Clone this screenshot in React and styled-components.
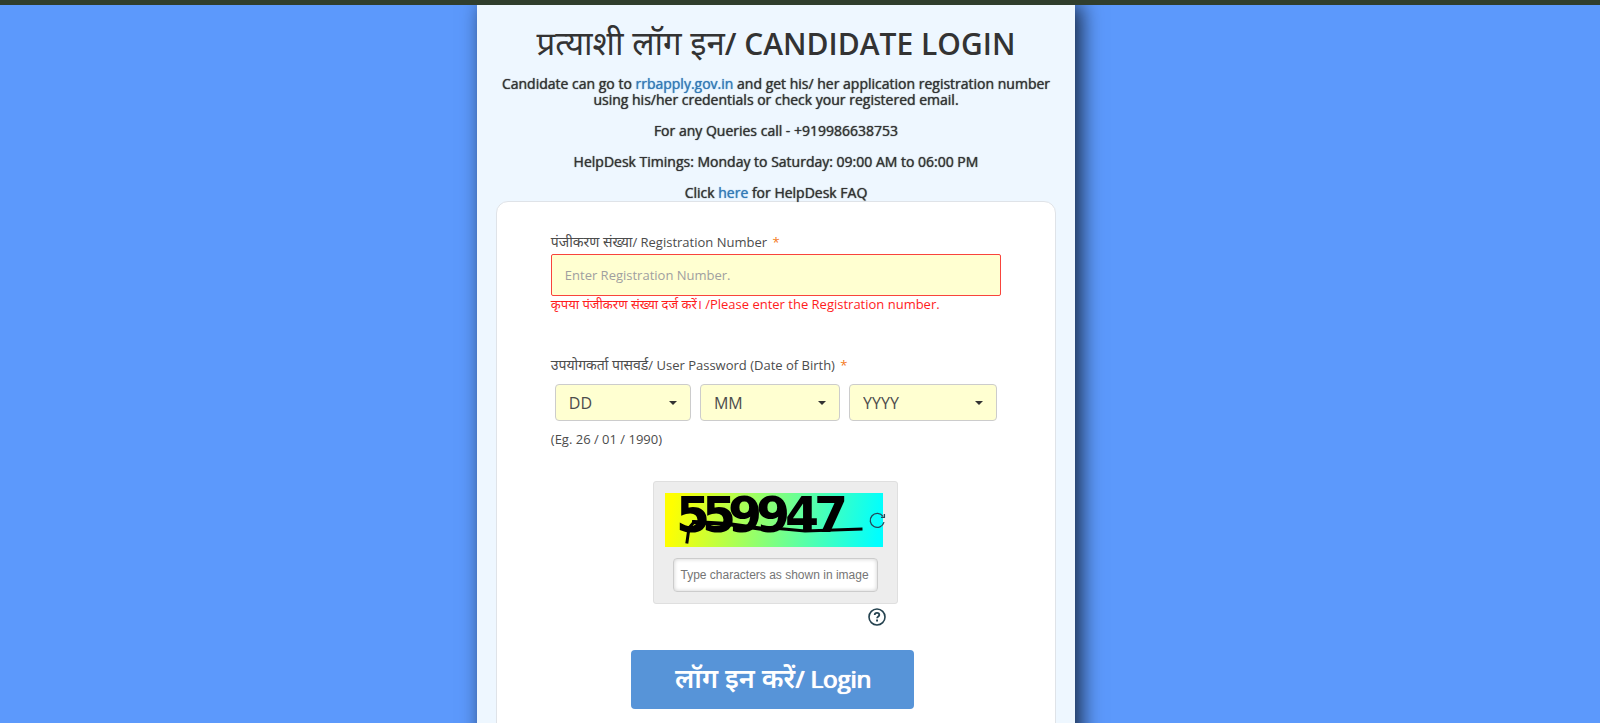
import { useState } from 'react';
import styled, { createGlobalStyle } from 'styled-components';

const COLORS = {
    page: '#5c99fc',
    topBar: '#303e2d',
    panel: '#eef7ff',
    field: '#ffffd1',
    text: '#333333',
    label: '#4c4c4c',
    link: '#337ab7',
    error: '#ff1c1c',
    button: '#5794d8',
}

const FONT = '"Open Sans", "Noto Sans", sans-serif';

const GlobalStyle = createGlobalStyle`
    * {
        box-sizing: border-box;
    }
    html {
        scrollbar-width: none;
    }
    body {
        margin: 0;
        background-color: ${COLORS.page};
        color: ${COLORS.text};
        font-family: ${FONT};
    }
`

const Page = styled.div`
    display: flex;
    flex-direction: column;
    min-height: 100vh;
    overflow-x: hidden;
`

const TopBar = styled.header`
    height: 5px;
    background-color: ${COLORS.topBar};
    z-index: 1;
`

const Panel = styled.main`
    flex: 1;
    width: 37.4%;
    margin-left: 29.8%;
    padding: 0 19px 20px;
    background-color: ${COLORS.panel};
    box-shadow: 6px 0 20px rgba(0, 0, 0, 0.75);
    @media(max-width: 1400px) {
        width: auto;
        max-width: 600px;
        margin: 0 auto;
    }
`

const Hindi = styled.span`
    font-size: ${props => props.size}px;
    font-weight: ${props => props.weight || 400};
    text-shadow: none;
`

const Heading = styled.h1`
    margin: 18px 0 12px;
    font-size: 30px;
    line-height: 40px;
    font-weight: 600;
    text-align: center;
`

const Notice = styled.p`
    margin: 0 0 15px;
    font-size: 14px;
    line-height: 16px;
    text-align: center;
    text-shadow: 0 0 1px currentColor;
    &:last-of-type {
        margin-bottom: 0;
    }
`

const TextLink = styled.a`
    color: ${COLORS.link};
    text-decoration: none;
    &:hover {
        text-decoration: underline;
    }
`

const Card = styled.form`
    display: flex;
    flex-direction: column;
    padding: 30px 54px 40px;
    border: 1px solid #dfe3e8;
    border-radius: 12px;
    background-color: #ffffff;
`

const Label = styled.label`
    display: block;
    font-size: 13px;
    line-height: 20px;
    color: ${COLORS.label};
`

const Legend = styled(Label).attrs({ as: 'legend' })`
    padding: 0;
    margin-bottom: 9px;
`

const Required = styled.span`
    margin-left: 2px;
    color: #f47a20;
`

const TextField = styled.input`
    width: 100%;
    height: 42px;
    margin-top: 2px;
    padding: 0 13px;
    border: 1px solid #f8443c;
    border-radius: 2px;
    background-color: ${COLORS.field};
    font-family: ${FONT};
    font-size: 13px;
    outline: none;
    &::placeholder {
        color: #a0a0a0;
        opacity: 1;
    }
`

const ErrorText = styled.div`
    font-size: 13px;
    line-height: 16px;
    color: ${COLORS.error};
`

const DateGroup = styled.fieldset`
    min-width: 0;
    margin: 43px 0 0;
    padding: 0;
    border: 0;
`

const DateRow = styled.div`
    display: grid;
    grid-template-columns: 136fr 140fr 148fr;
    gap: 9px;
    padding: 0 4px;
`

const SelectBox = styled.div`
    position: relative;
`

const Select = styled.select`
    appearance: none;
    display: block;
    width: 100%;
    height: 37px;
    padding: 0 13px;
    border: 1px solid #cccccc;
    border-radius: 4px;
    background-color: ${COLORS.field};
    color: ${COLORS.label};
    font-family: ${FONT};
    font-size: 16px;
`

const Caret = styled.span`
    position: absolute;
    top: 17px;
    right: 14px;
    border-top: 4px solid ${COLORS.text};
    border-left: 4px solid transparent;
    border-right: 4px solid transparent;
    pointer-events: none;
`

const Example = styled.div`
    margin-top: 8px;
    font-size: 13px;
    line-height: 20px;
    color: ${COLORS.label};
`

const CaptchaBlock = styled.div`
    display: flex;
    flex-direction: column;
    align-items: flex-end;
    align-self: center;
    margin-top: 32px;
`

const CaptchaBox = styled.div`
    display: flex;
    flex-direction: column;
    align-items: center;
    width: 245px;
    height: 123px;
    padding-top: 11px;
    border: 1px solid #dfdfdf;
    border-radius: 3px;
    background-color: #ededed;
`

const CaptchaPicture = styled.div`
    position: relative;
    width: 218px;
    height: 54px;
    margin: 0 3px 11px 0;
    background: linear-gradient(100deg, #ffff00 4%, #00ffff 97%);
`

const Digits = styled.svg`
    display: block;
    width: 100%;
    height: 100%;
    overflow: visible;
`

const IconButton = styled.button`
    display: flex;
    padding: 0;
    border: 0;
    background: none;
    cursor: pointer;
`

const RefreshButton = styled(IconButton)`
    position: absolute;
    top: 19px;
    right: -3px;
`

const HelpButton = styled(IconButton)`
    margin: 4px 12px 0 0;
`

const CaptchaInput = styled.input`
    width: 205px;
    height: 34px;
    padding: 0 6px;
    border: 1px solid #cccccc;
    border-radius: 4px;
    box-shadow: inset 0 0 4px rgba(0, 0, 0, 0.2);
    font-family: "Liberation Sans", Arial, sans-serif;
    font-size: 12px;
    &::placeholder {
        color: #757575;
        opacity: 1;
    }
`

const LoginButton = styled.button`
    align-self: center;
    width: 283px;
    height: 59px;
    margin: 24px 6px 0 0;
    padding: 0 0 2px;
    border: 0;
    border-radius: 4px;
    background-color: ${COLORS.button};
    color: #ffffff;
    font-family: ${FONT};
    font-size: 24px;
    line-height: 32px;
    text-shadow: 0 0 1px currentColor, 1px 0 0 currentColor;
    cursor: pointer;
`

const DATE_PARTS = [
    { name: 'day', label: 'DD', from: 1, to: 31 },
    { name: 'month', label: 'MM', from: 1, to: 12 },
    { name: 'year', label: 'YYYY', from: 1960, to: 2010 },
]

const DatePart = ({ part }) => {
    const values = [];
    for (let i = part.from; i <= part.to; i++) values.push(String(i).padStart(2, '0'));
    return (
        <SelectBox>
            <Select name={part.name} aria-label={part.name} defaultValue="">
                <option value="">{part.label}</option>
                {values.map(value => <option key={value} value={value}>{value}</option>)}
            </Select>
            <Caret />
        </SelectBox>
    )
}

const CaptchaDrawing = () => (
    <Digits viewBox="0 0 218 54" role="img" aria-label="captcha">
        <text x="11 37 63 91 120 149" y="39" fontFamily="DejaVu Sans" fontWeight="bold" fontSize="49">559947</text>
        <g fill="none" stroke="#000000" strokeLinecap="square">
            <path d="M22 49L24 35L29 29" strokeWidth="3" />
            <path d="M29 29L63 31L98 36" strokeWidth="4" />
            <path d="M98 34L140 38L196 36" strokeWidth="3" />
        </g>
    </Digits>
)

const RefreshIcon = () => (
    <svg width="17" height="17" viewBox="0 0 17 17" fill="none" stroke="#24485a" strokeWidth="1.3">
        <path d="M15 10.2A7 7 0 1 1 14 4.4" />
        <path d="M15.4 2V5.4H12" />
    </svg>
)

const HelpIcon = () => (
    <svg width="18" height="18" viewBox="0 0 18 18" fill="none" stroke="#24424f">
        <circle cx="9" cy="9" r="8" strokeWidth="1.6" />
        <path d="M6.7 7.1C6.7 5.7 7.7 4.9 9 4.9C10.4 4.9 11.3 5.7 11.3 6.9C11.3 8.4 9.1 8.5 9.1 10.3" strokeWidth="1.8" />
        <path d="M8.1 12.5H10" strokeWidth="1.9" />
    </svg>
)

const LoginForm = () => {
    const [registration, setRegistration] = useState('');
    return (
        <Card onSubmit={e => e.preventDefault()}>
            <Label htmlFor="registration">
                <Hindi size={14}>पंजीकरण संख्या</Hindi>/ Registration Number <Required>*</Required>
            </Label>
            <TextField
                id="registration"
                placeholder="Enter Registration Number."
                value={registration}
                onChange={e => setRegistration(e.target.value)}
            />
            <ErrorText>कृपया पंजीकरण संख्या दर्ज करें। /Please enter the Registration number.</ErrorText>
            <DateGroup>
                <Legend>
                    <Hindi size={14}>उपयोगकर्ता पासवर्ड</Hindi>/ User Password (Date of Birth) <Required>*</Required>
                </Legend>
                <DateRow>
                    {DATE_PARTS.map(part => <DatePart key={part.name} part={part} />)}
                </DateRow>
            </DateGroup>
            <Example>(Eg. 26 / 01 / 1990)</Example>
            <CaptchaBlock>
                <CaptchaBox>
                    <CaptchaPicture>
                        <CaptchaDrawing />
                        <RefreshButton type="button" aria-label="Refresh"><RefreshIcon /></RefreshButton>
                    </CaptchaPicture>
                    <CaptchaInput aria-label="Captcha" placeholder="Type characters as shown in image" />
                </CaptchaBox>
                <HelpButton type="button" aria-label="Help"><HelpIcon /></HelpButton>
            </CaptchaBlock>
            <LoginButton type="submit"><Hindi size={27} weight={600}>लॉग इन करें</Hindi>/ Login</LoginButton>
        </Card>
    )
}

const App = () => {
    return (
        <Page>
            <GlobalStyle />
            <TopBar />
            <Panel>
                <Heading><Hindi size={33}>प्रत्याशी लॉग इन</Hindi>/ CANDIDATE LOGIN</Heading>
                <Notice>
                    Candidate can go to <TextLink href="#apply">rrbapply.gov.in</TextLink> and get his/ her application registration number using his/her credentials or check your registered email.
                </Notice>
                <Notice>For any Queries call - +919986638753</Notice>
                <Notice>HelpDesk Timings: Monday to Saturday: 09:00 AM to 06:00 PM</Notice>
                <Notice>Click <TextLink href="#faq">here</TextLink> for HelpDesk FAQ</Notice>
                <LoginForm />
            </Panel>
        </Page>
    )
}

export default App
